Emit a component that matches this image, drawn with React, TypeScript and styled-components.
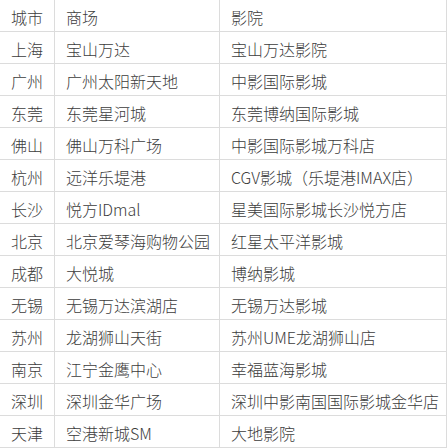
import React from "react";
import styled, { createGlobalStyle } from "styled-components";

const GlobalStyle = createGlobalStyle`
  html, body {
    margin: 0;
    padding: 0;
    background: #fff;
  }
`;

const Table = styled.table`
  border-collapse: collapse;
  table-layout: fixed;
  width: 448px;
  margin: -1px 0 0 -1px;
  font-family: "Noto Sans CJK SC", "Noto Sans", sans-serif;
  font-size: 16px;
  font-weight: 300;
  color: #3c3c3c;
`;

const Row = styled.tr`
  height: 32px;
`;

const Cell = styled.td<{ $w?: number }>`
  box-sizing: border-box;
  border: 1px solid #dcdcdc;
  padding: 2px 0 0 11px;
  line-height: 20px;
  white-space: nowrap;
  overflow: hidden;
  ${(p) => (p.$w ? `width: ${p.$w}px;` : "")}
`;

const rows: [string, string, string][] = [
  ["城市", "商场", "影院"],
  ["上海", "宝山万达", "宝山万达影院"],
  ["广州", "广州太阳新天地", "中影国际影城"],
  ["东莞", "东莞星河城", "东莞博纳国际影城"],
  ["佛山", "佛山万科广场", "中影国际影城万科店"],
  ["杭州", "远洋乐堤港", "CGV影城（乐堤港IMAX店）"],
  ["长沙", "悦方IDmal", "星美国际影城长沙悦方店"],
  ["北京", "北京爱琴海购物公园", "红星太平洋影城"],
  ["成都", "大悦城", "博纳影城"],
  ["无锡", "无锡万达滨湖店", "无锡万达影城"],
  ["苏州", "龙湖狮山天街", "苏州UME龙湖狮山店"],
  ["南京", "江宁金鹰中心", "幸福蓝海影城"],
  ["深圳", "深圳金华广场", "深圳中影南国国际影城金华店"],
  ["天津", "空港新城SM", "大地影院"],
];

export default function App() {
  return (
    <>
      <GlobalStyle />
      <Table>
        <tbody>
          {rows.map((r, i) => (
            <Row key={i}>
              <Cell $w={55}>{r[0]}</Cell>
              <Cell $w={165}>{r[1]}</Cell>
              <Cell>{r[2]}</Cell>
            </Row>
          ))}
        </tbody>
      </Table>
    </>
  );
}
